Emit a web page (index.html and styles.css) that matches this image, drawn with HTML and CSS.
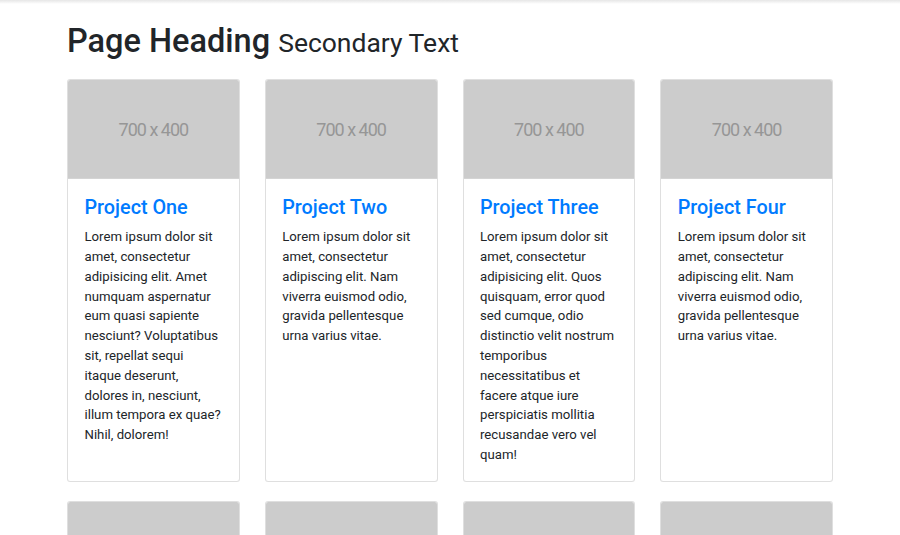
FILE: index.html
```html
<!DOCTYPE html>
<html lang="en">
<head>
<meta charset="utf-8">
<title>Portfolio</title>
<link rel="stylesheet" href="styles.css">
</head>
<body>
<div class="topshade"></div>
<main class="container">
  <h1 class="page-title">Page Heading <small>Secondary Text</small></h1>
  <div class="grid">
    <div class="card">
      <div class="card-img"><span>700 x 400</span></div>
      <div class="card-body">
        <h4 class="card-title"><a href="#">Project One</a></h4>
        <p class="card-text">Lorem ipsum dolor sit amet, consectetur adipisicing elit. Amet numquam aspernatur eum quasi sapiente nesciunt? Voluptatibus sit, repellat sequi itaque deserunt, dolores in, nesciunt, illum tempora ex quae? Nihil, dolorem!</p>
      </div>
    </div>
    <div class="card">
      <div class="card-img"><span>700 x 400</span></div>
      <div class="card-body">
        <h4 class="card-title"><a href="#">Project Two</a></h4>
        <p class="card-text">Lorem ipsum dolor sit amet, consectetur adipiscing elit. Nam viverra euismod odio, gravida pellentesque urna varius vitae.</p>
      </div>
    </div>
    <div class="card">
      <div class="card-img"><span>700 x 400</span></div>
      <div class="card-body">
        <h4 class="card-title"><a href="#">Project Three</a></h4>
        <p class="card-text">Lorem ipsum dolor sit amet, consectetur adipisicing elit. Quos quisquam, error quod sed cumque, odio distinctio velit nostrum temporibus necessitatibus et facere atque iure perspiciatis mollitia recusandae vero vel quam!</p>
      </div>
    </div>
    <div class="card">
      <div class="card-img"><span>700 x 400</span></div>
      <div class="card-body">
        <h4 class="card-title"><a href="#">Project Four</a></h4>
        <p class="card-text">Lorem ipsum dolor sit amet, consectetur adipiscing elit. Nam viverra euismod odio, gravida pellentesque urna varius vitae.</p>
      </div>
    </div>
    <div class="card">
      <div class="card-img"><span>700 x 400</span></div>
      <div class="card-body">
        <h4 class="card-title"><a href="#">Project Five</a></h4>
        <p class="card-text">Lorem ipsum dolor sit amet, consectetur adipiscing elit. Nam viverra euismod odio, gravida pellentesque urna varius vitae.</p>
      </div>
    </div>
    <div class="card">
      <div class="card-img"><span>700 x 400</span></div>
      <div class="card-body">
        <h4 class="card-title"><a href="#">Project Six</a></h4>
        <p class="card-text">Lorem ipsum dolor sit amet, consectetur adipisicing elit. Omnis aliquid atque, nulla?</p>
      </div>
    </div>
    <div class="card">
      <div class="card-img"><span>700 x 400</span></div>
      <div class="card-body">
        <h4 class="card-title"><a href="#">Project Seven</a></h4>
        <p class="card-text">Lorem ipsum dolor sit amet, consectetur adipiscing elit. Nam viverra euismod odio, gravida pellentesque urna varius vitae.</p>
      </div>
    </div>
    <div class="card">
      <div class="card-img"><span>700 x 400</span></div>
      <div class="card-body">
        <h4 class="card-title"><a href="#">Project Eight</a></h4>
        <p class="card-text">Lorem ipsum dolor sit amet, consectetur adipisicing elit. Eius adipisci dicta dignissimos neque animi ea, veritatis.</p>
      </div>
    </div>
  </div>
</main>
</body>
</html>
```
FILE: styles.css
```css
html, body {
  margin: 0;
  padding: 0;
  background: #fff;
  overflow: hidden;
}
body {
  font-family: Roboto, "Liberation Sans", Arial, sans-serif;
  font-size: 13.2px;
  line-height: 1.5;
  color: #212529;
}
.topshade {
  height: 4px;
  background: linear-gradient(#e6e6e6, #ffffff);
}
.container {
  width: 766px;
  margin-left: 67px;
}
.page-title {
  margin: 18px 0 18px;
  font-size: 32.5px;
  font-weight: 500;
  line-height: 1.2;
  color: #212529;
}
.page-title small {
  font-size: 81.5%;
  font-weight: 400;
}
.grid {
  display: grid;
  grid-template-columns: repeat(4, 1fr);
  column-gap: 25px;
  row-gap: 19px;
}
.card {
  display: flex;
  flex-direction: column;
  border: 1px solid rgba(0, 0, 0, 0.125);
  border-radius: 3.3px;
  background: #fff;
  overflow: hidden;
}
.card-img {
  height: 98px;
  background: #cccccc;
  display: flex;
  align-items: center;
  justify-content: center;
  border-bottom: 1px solid #d4d4d4;
}
.card-img span {
  font-family: Roboto, "Liberation Sans", sans-serif;
  font-weight: 400;
  font-size: 18px;
  letter-spacing: -1px;
  color: #969696;
}
.card-body {
  padding: 16.5px 16.5px 16px;
  flex: 1;
}
.card-title {
  margin: 0 0 8px;
  font-size: 19.8px;
  font-weight: 500;
  line-height: 1.2;
}
.card-title a {
  color: #007bff;
  text-decoration: none;
}
.card-text {
  margin: 0;
}
```
